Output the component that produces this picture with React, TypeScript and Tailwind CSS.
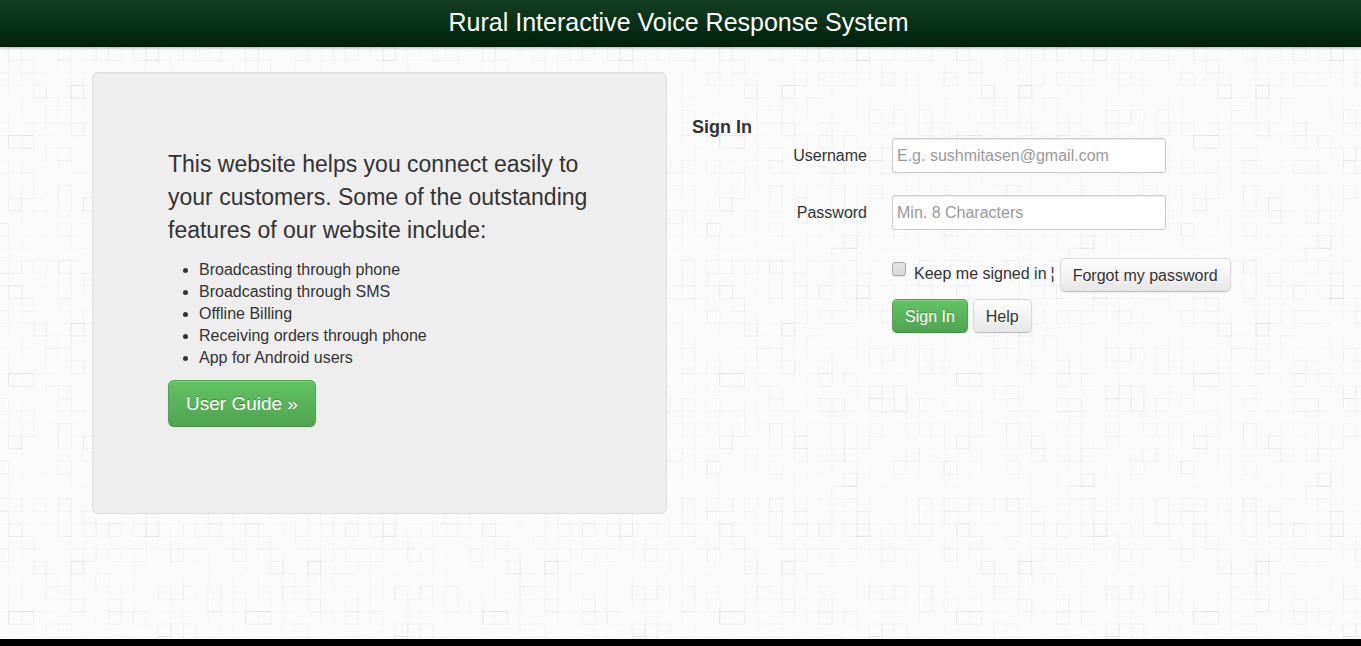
import type { ReactNode } from "react";

// Paver texture: [column, row, width, height, opacity] on a 19 x 19 grid.
const CELL_W = 237 / 19;
const CELL_H = 238 / 19;
const blocks: number[][] = [
  [11, 2, 2, 1, 0.14], [4, 3, 1, 1, 0.08], [5, 3, 1, 2, 0.06], [6, 3, 1, 2, 0.08],
  [4, 4, 2, 1, 0.05], [0, 4, 2, 1, 0.07], [8, 4, 1, 1, 0.05], [10, 4, 1, 1, 0.03],
  [15, 4, 1, 1, 0.04], [0, 2, 1, 1, 0.06], [2, 2, 1, 1, 0.05], [0, 1, 1, 1, 0.05],
  [4, 0, 1, 1, 0.05], [5, 0, 1, 1, 0.04], [6, 0, 1, 1, 0.04], [8, 0, 1, 2, 0.06],
  [14, 0, 2, 1, 0.06], [16, 1, 1, 1, 0.05], [10, 1, 1, 1, 0.03], [1, 6, 1, 3, 0.06],
  [15, 6, 1, 2, 0.07], [11, 7, 1, 1, 0.12], [17, 7, 1, 1, 0.08], [17, 8, 1, 1, 0.06],
  [7, 6, 1, 1, 0.04], [3, 7, 1, 1, 0.04], [2, 8, 1, 1, 0.04], [7, 8, 1, 1, 0.05],
  [10, 9, 1, 1, 0.09], [15, 9, 1, 1, 0.03], [6, 9, 1, 1, 0.05], [2, 10, 1, 1, 0.12],
  [1, 11, 2, 1, 0.07], [2, 12, 1, 1, 0.03], [3, 13, 1, 1, 0.07], [3, 14, 1, 1, 0.12],
  [0, 14, 1, 1, 0.09], [2, 14, 1, 1, 0.07], [11, 14, 1, 1, 0.12], [7, 14, 2, 1, 0.08],
  [8, 12, 1, 2, 0.06], [10, 12, 2, 1, 0.05], [15, 12, 1, 1, 0.09], [15, 13, 1, 2, 0.05],
  [17, 13, 1, 1, 0.06], [17, 14, 1, 1, 0.05], [10, 13, 1, 1, 0.05], [5, 14, 1, 1, 0.03],
  [5, 16, 1, 1, 0.07], [13, 17, 1, 1, 0.1], [16, 17, 1, 1, 0.16], [17, 16, 1, 1, 0.04],
  [10, 16, 1, 1, 0.05], [12, 15, 1, 1, 0.06], [0, 16, 3, 1, 0.04], [16, 18, 1, 1, 0.03],
  [18, 18, 1, 1, 0.04], [14, 18, 2, 1, 0.03], [3, 15, 2, 1, 0.03], [12, 5, 1, 2, 0.04],
  [14, 3, 2, 1, 0.04], [13, 12, 1, 1, 0.02], [9, 6, 1, 3, 0.02], [4, 6, 1, 1, 0.03],
];

function Texture() {
  return (
    <svg aria-hidden="true" className="absolute inset-0 -z-10 h-full w-full">
      <defs>
        <pattern id="pavers" x="108" y="110" width="237" height="238" patternUnits="userSpaceOnUse">
          <rect width="237" height="238" fill="#fbfbfb" />
          {Array.from({ length: 19 }, (_, i) => (
            <path
              key={i}
              d={`M${i * CELL_W + 0.5} 0V238M0 ${i * CELL_H + 0.5}H237`}
              stroke="#000"
              strokeOpacity="0.012"
              strokeDasharray={`${CELL_W * ((i % 3) + 1)} ${CELL_W * ((i % 2) + 1)}`}
            />
          ))}
          {blocks.map(([c, r, w, h, o], i) => {
            const x = c * CELL_W + 0.5;
            const y = r * CELL_H + 0.5;
            const bw = w * CELL_W;
            const bh = h * CELL_H;
            return (
              <g key={i} fill="none">
                <rect x={x + 1} y={y + 1} width={bw - 2} height={bh - 2} stroke="#fff" strokeOpacity="0.5" />
                <rect x={x} y={y} width={bw} height={bh} stroke="#000" strokeOpacity={o * 0.3} />
                <path
                  d={i % 2 ? `M${x} ${y + bh}H${x + bw}V${y}` : `M${x} ${y + bh}V${y}H${x + bw}`}
                  stroke="#000"
                  strokeOpacity={o * 0.2}
                />
              </g>
            );
          })}
        </pattern>
      </defs>
      <rect width="100%" height="100%" fill="url(#pavers)" />
    </svg>
  );
}

const green =
  "border-[#51a351] border-b-[#478f47] bg-linear-to-b from-[#62c462] to-[#51a351] text-white [text-shadow:0_-1px_0_rgba(0,0,0,0.25)]";
const light =
  "border-[#d9d9d9] border-b-[#bfbfbf] bg-linear-to-b from-white to-[#e6e6e6] text-[#333] [text-shadow:0_1px_1px_rgba(255,255,255,0.75)]";

function Button({ tone, type = "button", children }: { tone: string; type?: "button" | "submit"; children: ReactNode }) {
  return (
    <button
      type={type}
      className={`h-[34px] rounded-[5px] border px-3 pt-[2px] text-base leading-[22px] shadow-[inset_0_1px_0_rgba(255,255,255,0.2),0_1px_2px_rgba(0,0,0,0.05)] ${tone}`}
    >
      {children}
    </button>
  );
}

function Field({ id, label, type, placeholder }: { id: string; label: string; type: string; placeholder: string }) {
  return (
    <div className="mb-[22px] flex items-center gap-[25px]">
      <label htmlFor={id} className="w-[175px] text-right">{label}</label>
      <input
        id={id}
        type={type}
        placeholder={placeholder}
        className="h-[35px] w-[274px] rounded-[3px] border border-[#ccc] bg-white px-1 shadow-[inset_0_1px_1px_rgba(0,0,0,0.075)] placeholder:text-[#999]"
      />
    </div>
  );
}

const features = [
  "Broadcasting through phone",
  "Broadcasting through SMS",
  "Offline Billing",
  "Receiving orders through phone",
  "App for Android users",
];

export default function App() {
  return (
    <div className="relative isolate flex min-h-screen flex-col font-['Liberation_Sans',Arial,sans-serif] text-base leading-[22px] text-[#333]">
      <Texture />
      <header className="h-[47px] bg-linear-to-b from-[#154025] to-[#00210c] shadow-[0_1px_3px_rgba(0,0,0,0.25),inset_0_-1px_0_rgba(0,0,0,0.1)]">
        <h1 className="pr-1 text-center text-[25px] leading-[45px] text-white">Rural Interactive Voice Response System</h1>
      </header>
      <main className="grid flex-1 grid-cols-[575fr_577fr] items-start gap-[25px] px-[92px] pt-[25px]">
        <section className="rounded-md border border-[#dfdfdf] bg-[#eee] px-[75px] pt-[75px] pb-[86px] shadow-[inset_0_1px_1px_rgba(0,0,0,0.05)]">
          <p className="mb-3 text-[23px] leading-[33px]">
            This website helps you connect easily to your customers. Some of the outstanding features of our website include:
          </p>
          <ul className="mb-[11px] list-disc pl-[31px]">
            {features.map((f) => <li key={f}>{f}</li>)}
          </ul>
          <a
            href="#guide"
            className={`block w-fit rounded-md border px-[17px] py-3 text-[19px] leading-[21px] shadow-[inset_0_1px_0_rgba(255,255,255,0.2),0_1px_2px_rgba(0,0,0,0.05)] ${green}`}
          >
            User Guide »
          </a>
        </section>
        <form className="pt-11" onSubmit={(e) => e.preventDefault()}>
          <h2 className="text-lg leading-[22px] font-bold">Sign In</h2>
          <Field id="username" label="Username" type="text" placeholder="E.g. sushmitasen@gmail.com" />
          <Field id="password" label="Password" type="password" placeholder="Min. 8 Characters" />
          <div className="pt-[6px] pl-[200px]">
            <div className="flex items-start">
              <label className="flex items-start gap-2 pt-1">
                <input
                  type="checkbox"
                  className="size-[14px] appearance-none rounded-[3px] border border-[#a8a8a8] bg-linear-to-b from-[#e4e4e4] to-[#d8d8d8] shadow-[0_1px_1px_rgba(0,0,0,0.1)]"
                />
                <span className="pt-px">Keep me signed in</span>
              </label>
              <span className="px-1 pt-[5px] pr-[5px]">¦</span>
              <Button tone={light}>Forgot my password</Button>
            </div>
            <div className="mt-[7px] flex gap-[5px]">
              <Button tone={green} type="submit">Sign In</Button>
              <Button tone={light}>Help</Button>
            </div>
          </div>
        </form>
      </main>
      <footer className="h-[7px] bg-black" />
    </div>
  );
}
